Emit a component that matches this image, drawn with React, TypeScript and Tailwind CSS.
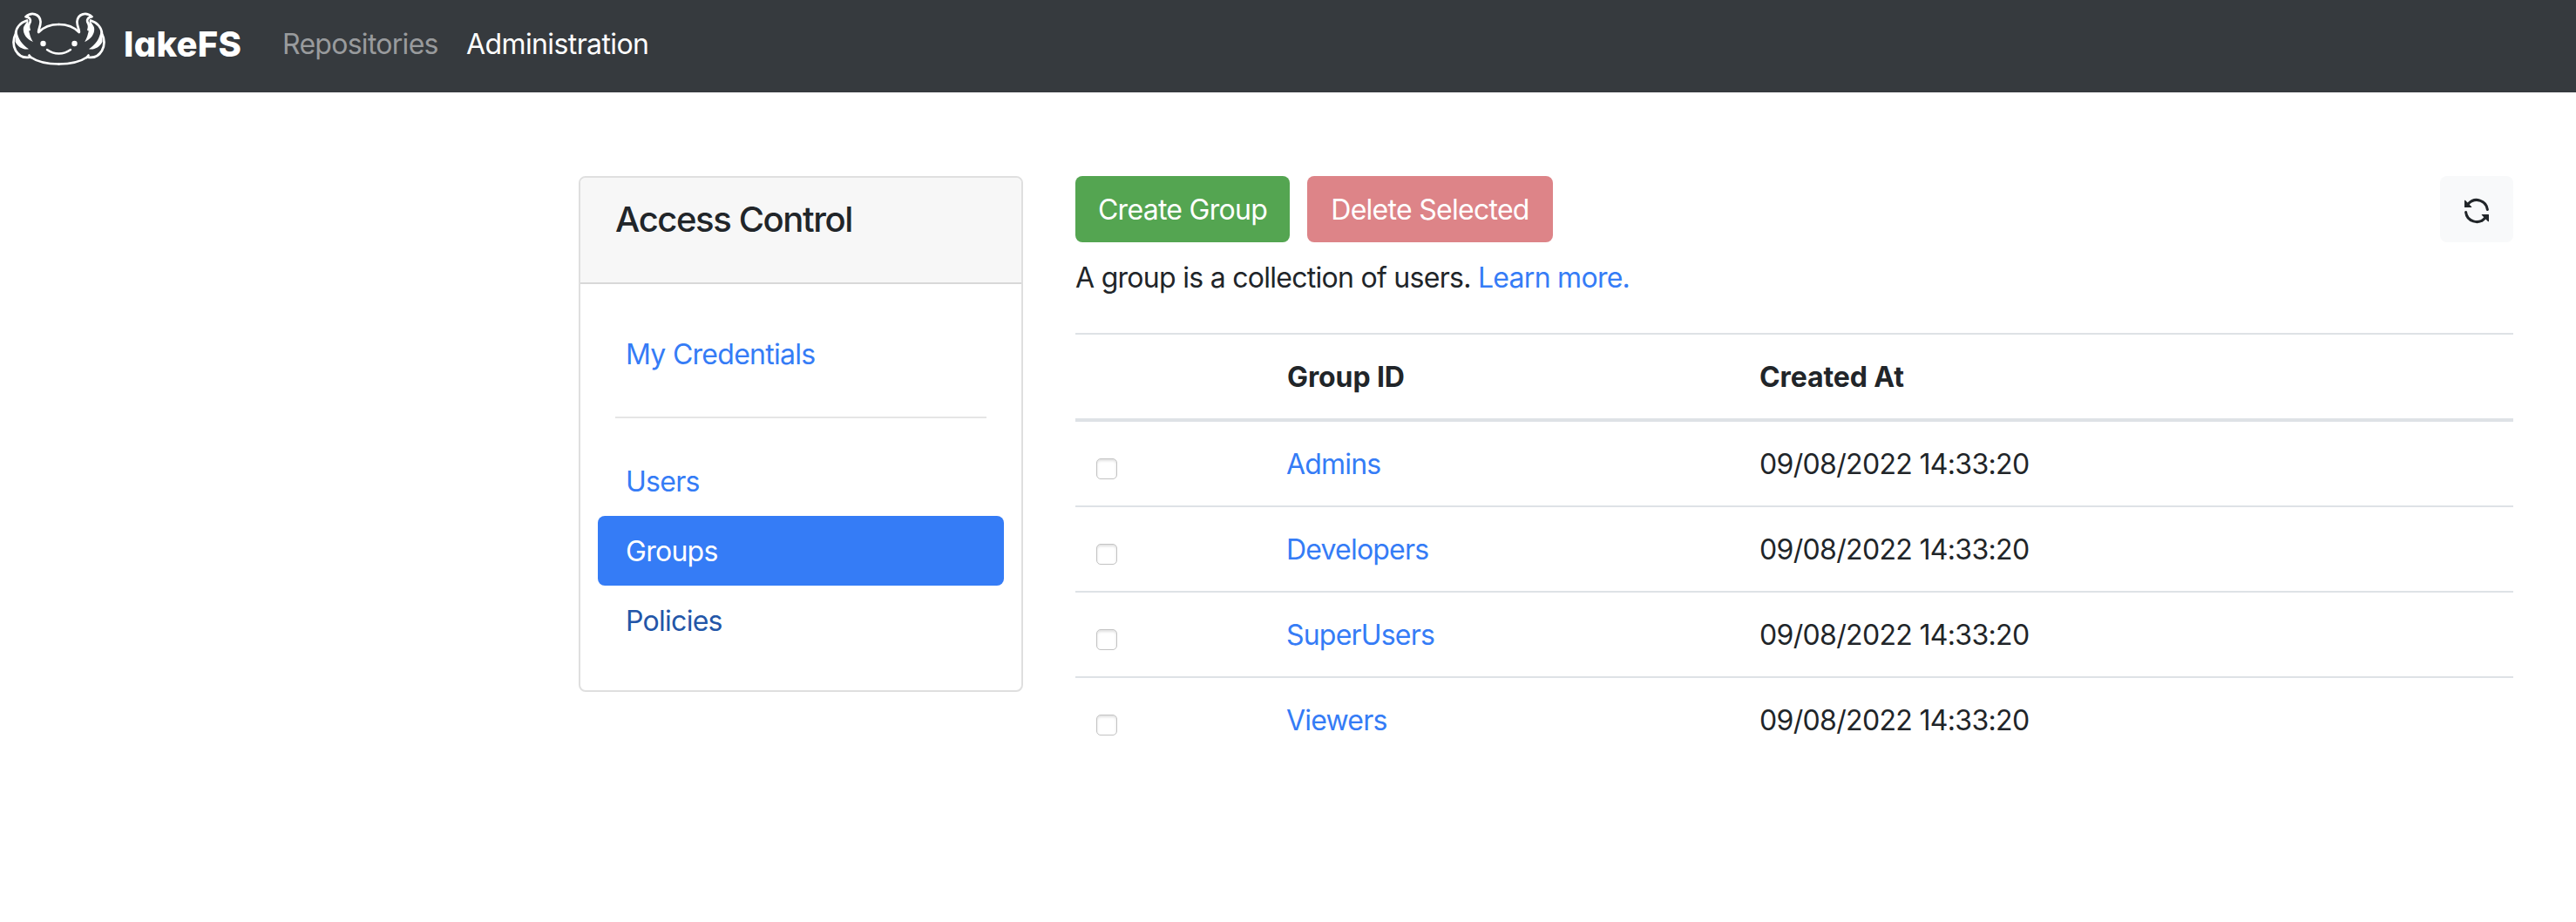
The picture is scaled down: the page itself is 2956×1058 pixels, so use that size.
import React from "react";

const groups = ["Admins", "Developers", "SuperUsers", "Viewers"];

function AxolotlHalf() {
  return (
    <g>
      <path d="M53.500 14 C44 14 36 17 30.200 23 C29.500 20 33 16 32.500 10.500 C31.500 1.500 22 -0.500 15.500 5.200 C20.500 6 22 9 20 12.500 C18.500 15 18.500 17 19.500 20" />
      <path d="M17 9.500 C9 12 4.300 18 4 24.500 C0.800 31 0.800 38 4 44 C8 51 14 53 21 51.500 C29 57 41 59.500 53.500 59.500" />
      <path d="M17.500 9 C20 12 17 15 18.800 20 C20 24 20.500 29 24 34 C16.500 31 12.500 25 12.800 19 C13 15 16.500 13 17.500 9 Z" fill="white" stroke="none" />
      <path d="M3.500 22.500 L5.500 22.500 C7 30.500 11 37 19 42.200 C14 43.500 7 41 3.500 34 Z" fill="white" stroke="none" />
      <path d="M19.500 49.500 L21.500 52" />
    </g>
  );
}

function Logo() {
  return (
    <svg width="107" height="62" viewBox="0 0 107 62" fill="none" stroke="white" strokeWidth="2.700" strokeLinejoin="round" strokeLinecap="round">
      <AxolotlHalf />
      <g transform="translate(107 0) scale(-1 1)">
        <AxolotlHalf />
      </g>
      <circle cx="35.500" cy="36" r="3.200" fill="white" stroke="none" />
      <circle cx="71.500" cy="36" r="3.200" fill="white" stroke="none" />
      <path d="M40 43 C48 49 59 49 67 43" strokeWidth="2.400" />
    </svg>
  );
}

function SyncIcon() {
  return (
    <svg width="32" height="32" viewBox="0 0 16 16" fill="currentColor">
      <path d="M1.705 8.005a.75.75 0 0 1 .834.656 5.5 5.5 0 0 0 9.592 2.97l-1.204-1.204a.25.25 0 0 1 .177-.427h3.646a.25.25 0 0 1 .25.25v3.646a.25.25 0 0 1-.427.177l-1.38-1.38A7.002 7.002 0 0 1 1.05 8.84a.75.75 0 0 1 .656-.834ZM8 2.5a5.487 5.487 0 0 0-4.131 1.869l1.204 1.204A.25.25 0 0 1 4.896 6H1.25A.25.25 0 0 1 1 5.75V2.104a.25.25 0 0 1 .427-.177l1.38 1.38A7.002 7.002 0 0 1 14.95 7.16a.75.75 0 0 1-1.49.178A5.5 5.5 0 0 0 8 2.5Z" />
    </svg>
  );
}

export default function App() {
  return (
    <div className="h-[1058px] w-[2956px] overflow-hidden bg-white font-['Inter',sans-serif] text-[32px] leading-[48px] tracking-[-0.72px] text-[#212529]">
      <nav className="flex h-[106px] items-start bg-[#363a3e] pl-[14px]">
        <div className="pt-[14px]"><Logo /></div>
        <div className="ml-[21px] mt-[27px] w-[160px] text-[40px] font-extrabold tracking-[0.3px] text-white [font-feature-settings:'cv11']">lakeFS</div>
        <a className="ml-[22px] mt-[27px] w-[211px] text-[#999b9d]">Repositories</a>
        <a className="mt-[27px] tracking-[-0.6px] text-white">Administration</a>
      </nav>
      <main className="flex items-start pl-[664px] pt-[96px]">
        <aside className="h-[592px] w-[510px] shrink-0 rounded-[8px] border-2 border-[#dfdfdf]">
          <div className="h-[122px] rounded-t-[6px] border-b-2 border-[#d8d8d8] bg-[#f7f7f7] pl-[40px] pt-[24px] text-[40px] font-medium tracking-[-1.4px]">Access Control</div>
          <div className="flex flex-col px-[20px] pt-[40px]">
            <a className="h-[80px] px-[32px] pt-[17px] text-[#357cf6]">My Credentials</a>
            <hr className="mx-[20px] my-[32px] border-t-2 border-[#e5e5e5]" />
            <a className="h-[80px] px-[32px] pt-[17px] text-[#357cf6]">Users</a>
            <a className="h-[80px] rounded-[8px] bg-[#357cf6] px-[32px] pt-[17px] text-white">Groups</a>
            <a className="h-[80px] px-[32px] pt-[17px] text-[#2356a8]">Policies</a>
          </div>
        </aside>
        <section className="ml-[60px] w-[1650px]">
          <div className="flex items-start gap-[20px]">
            <button className="h-[76px] w-[246px] rounded-[8px] bg-[#54a551] pt-[2px] text-white">Create Group</button>
            <button className="h-[76px] w-[282px] rounded-[8px] bg-[#dd8488] pt-[2px] text-white">Delete Selected</button>
            <button className="ml-auto flex h-[76px] w-[84px] items-center justify-center rounded-[8px] bg-[#f8f9fa] pt-[4px]">
              <SyncIcon />
            </button>
          </div>
          <p className="mt-[17px]">A group is a collection of users. <a className="text-[#357cf6]">Learn more.</a></p>
          <div className="mt-[39px] border-t-2 border-[#dee2e6]">
            <div className="grid h-[100px] grid-cols-[219px_542px_1fr] border-b-4 border-[#dee2e6] font-bold tracking-[-0.1px]">
              <span />
              <span className="px-[24px] pt-[25px]">Group ID</span>
              <span className="px-[24px] pt-[25px]">Created At</span>
            </div>
            {groups.map((g) => (
              <div key={g} className="grid h-[98px] grid-cols-[219px_542px_1fr] border-b-2 border-[#dee2e6] last:border-b-0">
                <span className="pl-[24px] pt-[42px]">
                  <input type="checkbox" className="block size-[24px] appearance-none rounded-[5px] border border-[#c3c3c3] bg-white shadow-[inset_0_2px_3px_rgba(0,0,0,0.12)]" />
                </span>
                <a className="pl-[23px] pt-[25px] tracking-[-0.8px] text-[#357cf6]">{g}</a>
                <span className="px-[24px] pt-[25px] tracking-[-0.67px]">09/08/2022 14:33:20</span>
              </div>
            ))}
          </div>
        </section>
      </main>
    </div>
  );
}
